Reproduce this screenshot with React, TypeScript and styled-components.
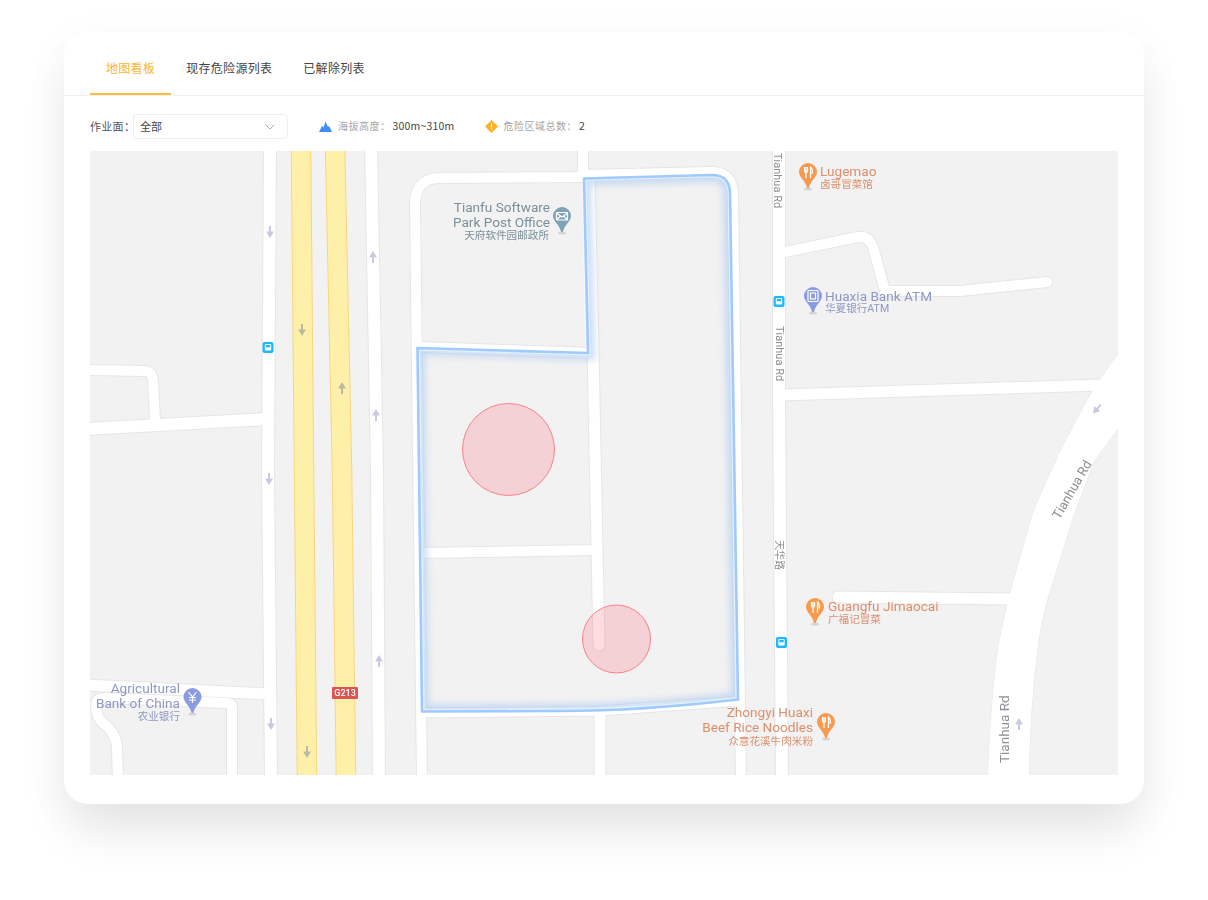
import React, { useState } from "react"
import styled, { createGlobalStyle } from "styled-components"

const GlobalStyle = createGlobalStyle`
  html, body {
    margin: 0;
    padding: 0;
    background: #fff;
  }
`

const tabs = ["地图看板", "现存危险源列表", "已解除列表"]

// page coordinates, the svg viewBox starts at the map's top left corner
const roads = [
  { d: "M270 145 L268 470 L271 780", w: 12 },
  { d: "M371 145 L377 470 L379 780", w: 12 },
  { d: "M583 145 L583 178", w: 10 },
  { d: "M583 177 L440 178 Q415 178 415 205 L422 780", w: 10 },
  { d: "M583 175 L712 172 Q733 172 733 195 L741 780", w: 10 },
  { d: "M420 347 L590 353", w: 10 },
  { d: "M589 176 L593 350 L599 645", w: 11, round: true },
  { d: "M420 553 L596 550", w: 10 },
  { d: "M422 713 L600 711 L740 701", w: 9 },
  { d: "M600 711 L600 780", w: 11 },
  { d: "M779 145 L779 400 L782 780", w: 12 },
  { d: "M780 253 L858 237 Q868 235 873 247 L885 291 L960 291 L1047 282", w: 10, round: true },
  { d: "M780 395 L1100 385", w: 11 },
  { d: "M838 597 L1012 599", w: 11, round: true },
  { d: "M85 429 L268 419", w: 12 },
  { d: "M85 370 L146 371 Q152 372 153 380 L155 420", w: 10 },
  { d: "M85 685 L268 694", w: 11 },
  { d: "M232 780 L232 708 Q232 703 227 703 L104 698 Q96 698 96 706 Q96 717 103 723 Q116 733 117 747 L118 780", w: 10 },
]

const tianhuaCurve =
  "M1124 345 L1093 390 Q1065 440 1053 467 Q1040 495 1033 513 L1010 593 L1007 605 L998 647 Q990 710 988 780 L1029 780 Q1029 720 1037 653 Q1040 625 1048 597 L1073 517 Q1085 485 1093 463 L1124 420 Z"

const highways = ["M301 145 L304 470 L307 780", "M335 145 L342 470 L346 780"]

const arrows = [
  { x: 270, y: 232, angle: 180 },
  { x: 269, y: 479, angle: 180 },
  { x: 271, y: 724, angle: 180 },
  { x: 373, y: 257, angle: 0 },
  { x: 376, y: 415, angle: 0 },
  { x: 379, y: 661, angle: 0 },
  { x: 1019, y: 724, angle: 0 },
  { x: 1097, y: 409, angle: 220 },
  { x: 302, y: 330, angle: 180, onHighway: true },
  { x: 342, y: 388, angle: 0, onHighway: true },
  { x: 307, y: 752, angle: 180, onHighway: true },
]

const busStops = [
  { x: 268, y: 347.5 },
  { x: 779, y: 301.5 },
  { x: 781.5, y: 642.5 },
]

const outline =
  "M584 178.5 L712 175 Q729 175 730 192 L738 699.5 Q640 711 560 711 L422 711.5 L417.5 348 L588 353 Z"

type PinKind = "food" | "mail" | "atm" | "bank"

const pinColors: Record<PinKind, string> = {
  food: "#f59a4e",
  mail: "#7fa2b5",
  atm: "#8b9be2",
  bank: "#8b9be2",
}

const pins: { x: number; y: number; kind: PinKind }[] = [
  { x: 808, y: 172, kind: "food" },
  { x: 562, y: 216, kind: "mail" },
  { x: 813, y: 296, kind: "atm" },
  { x: 815, y: 607, kind: "food" },
  { x: 826, y: 722, kind: "food" },
  { x: 192.5, y: 697, kind: "bank" },
]

const labels = [
  { x: 550, y: 211.5, tone: "#7b8f9b", end: true, text: "Tianfu Software" },
  { x: 550, y: 227, tone: "#7b8f9b", end: true, text: "Park Post Office" },
  { x: 549, y: 239, tone: "#7b8f9b", end: true, small: true, text: "天府软件园邮政所" },
  { x: 820, y: 176, tone: "#dc8f6c", text: "Lugemao" },
  { x: 820, y: 188, tone: "#dc8f6c", small: true, text: "卤哥冒菜馆" },
  { x: 825, y: 300.5, tone: "#8e97c4", text: "Huaxia Bank ATM" },
  { x: 825, y: 312, tone: "#8e97c4", small: true, text: "华夏银行ATM" },
  { x: 828, y: 611, tone: "#dc8f6c", text: "Guangfu Jimaocai" },
  { x: 828, y: 623, tone: "#dc8f6c", small: true, text: "广福记冒菜" },
  { x: 813, y: 717, tone: "#dc8f6c", end: true, text: "Zhongyi Huaxi" },
  { x: 813, y: 732, tone: "#dc8f6c", end: true, text: "Beef Rice Noodles" },
  { x: 813, y: 745, tone: "#dc8f6c", end: true, small: true, text: "众意花溪牛肉米粉" },
  { x: 180, y: 693, tone: "#8e97c4", end: true, text: "Agricultural" },
  { x: 180, y: 708, tone: "#8e97c4", end: true, text: "Bank of China" },
  { x: 180, y: 720, tone: "#8e97c4", end: true, small: true, text: "农业银行" },
]

const roadNames = [
  { x: 774, y: 153, angle: 90, size: 11, text: "Tianhua Rd" },
  { x: 775.5, y: 326, angle: 90, size: 11, text: "Tianhua Rd" },
  { x: 775.5, y: 540, angle: 90, size: 10, text: "天华路" },
  { x: 1059.5, y: 520, angle: -60, size: 13, text: "Tianhua Rd" },
  { x: 1009, y: 763, angle: -90, size: 13.5, text: "Tianhua Rd" },
]

const PinIcon = ({ kind }: { kind: PinKind }) => {
  if (kind === "food") {
    return (
      <IconStroke>
        <path d="M-3.5 -5 V-1.5 Q-3.5 0.5 -2 0.5 Q-0.5 0.5 -0.5 -1.5 V-5 M-2 -5 V6" />
        <path d="M2.5 6 V-5 Q4.5 -3.5 4.5 1 H2.5" />
      </IconStroke>
    )
  }
  if (kind === "mail") {
    return (
      <IconStroke>
        <rect x="-5.5" y="-3.5" width="11" height="7.5" rx="0.8" />
        <path d="M-5.5 -3 L0 1 L5.5 -3 M-5.5 4 L-1.5 0 M5.5 4 L1.5 0" />
      </IconStroke>
    )
  }
  if (kind === "atm") {
    return (
      <IconStroke>
        <rect x="-5" y="-5.5" width="10" height="11" rx="0.5" />
        <rect x="-2.5" y="-3" width="5" height="6" />
      </IconStroke>
    )
  }
  return (
    <IconStroke>
      <path d="M-4 -5 L0 0 L4 -5 M0 0 V6 M-3.5 0.5 H3.5 M-3.5 3 H3.5" />
    </IconStroke>
  )
}

const MapPin = ({ x, y, kind }: { x: number; y: number; kind: PinKind }) => (
  <g transform={`translate(${x} ${y})`}>
    <ellipse cx="0" cy="17" rx="4" ry="1.6" fill="#d5d5d5" />
    <path
      d="M-9 0 A9 9 0 1 1 9 0 C9 5 3 8 0.8 16 H-0.8 C-3 8 -9 5 -9 0 Z"
      fill={pinColors[kind]}
    />
    <PinIcon kind={kind} />
  </g>
)

const RoadMap = () => (
  <MapCanvas viewBox="90 151 1028 624">
    <defs>
      <clipPath id="zone-clip">
        <path d={outline} />
      </clipPath>
      <filter id="zone-blur" x="-10%" y="-10%" width="120%" height="120%">
        <feGaussianBlur stdDeviation="3.5" />
      </filter>
    </defs>

    <rect x="90" y="151" width="1028" height="624" fill="#f2f2f2" />

    <path d={tianhuaCurve} fill="#fff" stroke="#e6e6e6" strokeWidth="1" />
    {roads.map((road) => (
      <RoadCasing
        key={road.d}
        d={road.d}
        strokeWidth={road.w + 2}
        strokeLinecap={road.round ? "round" : "butt"}
      />
    ))}
    {roads.map((road) => (
      <RoadFill
        key={road.d}
        d={road.d}
        strokeWidth={road.w}
        strokeLinecap={road.round ? "round" : "butt"}
      />
    ))}
    <path d={tianhuaCurve} fill="#fff" />

    {highways.map((d) => (
      <g key={d}>
        <HighwayEdge d={d} />
        <HighwayFill d={d} />
      </g>
    ))}

    {arrows.map((arrow) => (
      <g
        key={`${arrow.x}-${arrow.y}`}
        transform={`translate(${arrow.x} ${arrow.y}) rotate(${arrow.angle})`}
        fill={arrow.onHighway ? "#bcb9a0" : "#c8cbe0"}
      >
        <rect x="-1" y="-2" width="2" height="8" />
        <path d="M-4 0.5 L0 -6 L4 0.5 Z" />
      </g>
    ))}

    {busStops.map((stop) => (
      <g key={stop.x} transform={`translate(${stop.x} ${stop.y})`}>
        <rect x="-5.5" y="-5.5" width="11" height="11" rx="2" fill="#1db8ff" />
        <rect x="-3.2" y="-3.5" width="6.4" height="6.5" rx="1" fill="#fff" />
        <rect x="-2.2" y="-2.6" width="4.4" height="2.4" fill="#1db8ff" />
      </g>
    ))}

    <g transform="translate(345 693)">
      <rect x="-13" y="-6" width="26" height="12" rx="1" fill="#dc5555" />
      <ShieldText x="0" y="3.4">G213</ShieldText>
    </g>

    <g clipPath="url(#zone-clip)">
      <path
        d={outline}
        fill="none"
        stroke="#a9c9f2"
        strokeWidth="14"
        opacity="0.6"
        filter="url(#zone-blur)"
      />
    </g>
    <path d={outline} fill="none" stroke="#fff" strokeWidth="5" opacity="0.5" />
    <path d={outline} fill="none" stroke="#9ecaff" strokeWidth="2.6" />

    <Hazard cx="508.5" cy="449.5" r="46" />
    <Hazard cx="616.5" cy="639" r="34" />

    {roadNames.map((name) => (
      <RoadName
        key={`${name.x}-${name.y}`}
        $size={name.size}
        transform={`translate(${name.x} ${name.y}) rotate(${name.angle})`}
      >
        {name.text}
      </RoadName>
    ))}

    {labels.map((label) => (
      <PoiLabel
        key={label.text}
        x={label.x}
        y={label.y}
        fill={label.tone}
        textAnchor={label.end ? "end" : "start"}
        $small={label.small}
      >
        {label.text}
      </PoiLabel>
    ))}

    {pins.map((pin) => (
      <MapPin key={`${pin.x}-${pin.y}`} {...pin} />
    ))}
  </MapCanvas>
)

const App = () => {
  const [activeTab, setActiveTab] = useState(0)

  return (
    <Page>
      <GlobalStyle />
      <Card>
        <TabBar>
          {tabs.map((tab, i) => (
            <Tab key={tab} $active={i === activeTab} onClick={() => setActiveTab(i)}>
              {tab}
            </Tab>
          ))}
        </TabBar>

        <Toolbar>
          <FieldLabel>作业面：</FieldLabel>
          <Select>
            <SelectValue>全部</SelectValue>
            <svg width="10" height="6" viewBox="0 0 10 6" fill="none">
              <path d="M0.7 0.7 L5 5 L9.3 0.7" stroke="#aaa" strokeWidth="1" />
            </svg>
          </Select>

          <Stat>
            <svg width="13" height="11" viewBox="0 0 13 11">
              <path
                d="M0 11 L3 5 L4.5 6.5 L6.5 0.5 L9 6 L10.2 5 L13 11 Z"
                fill="#3f8ef5"
              />
            </svg>
            <StatName>海拔高度：</StatName>
            <StatValue>300m~310m</StatValue>
          </Stat>

          <Stat>
            <svg width="13" height="13" viewBox="0 0 13 13">
              <path d="M6.5 0 L13 6.5 L6.5 13 L0 6.5 Z" fill="#fcb02a" />
              <rect x="5.9" y="3.2" width="1.2" height="4.2" fill="#fff" />
              <rect x="5.9" y="8.3" width="1.2" height="1.3" fill="#fff" />
            </svg>
            <StatName>危险区域总数：</StatName>
            <StatValue>2</StatValue>
          </Stat>
        </Toolbar>

        <RoadMap />
      </Card>
    </Page>
  )
}

export default App

const Page = styled.div`
  box-sizing: border-box;
  width: 1208px;
  height: 900px;
  padding: 32px 64px 0;
  background: #fff;
  overflow: hidden;
  font-family: "Noto Sans CJK SC", "Noto Sans", sans-serif;
`

const Card = styled.div`
  display: flex;
  flex-direction: column;
  box-sizing: border-box;
  width: 1080px;
  height: 772px;
  padding: 0 26px;
  background: #fff;
  border-radius: 24px;
  box-shadow: 0 32px 50px -6px rgba(0, 0, 0, 0.085), 0 12px 50px rgba(0, 0, 0, 0.045);
`

const TabBar = styled.div`
  display: flex;
  height: 64px;
  box-sizing: border-box;
  margin: 0 -26px;
  padding: 0 26px;
  border-bottom: 1px solid #f1f1f1;
`

const Tab = styled.div<{ $active: boolean }>`
  box-sizing: border-box;
  height: 63px;
  margin-right: -1px;
  padding: 0 16px;
  font-size: 12px;
  letter-spacing: 0.3px;
  line-height: 71px;
  cursor: pointer;
  color: ${(props) => (props.$active ? "#fcb62f" : "#444")};
  border-bottom: 2px solid
    ${(props) => (props.$active ? "#fcbc3c" : "transparent")};
`

const Toolbar = styled.div`
  display: flex;
  align-items: center;
  box-sizing: border-box;
  height: 55px;
  padding-top: 6px;
  font-size: 11px;
  color: #555;
`

const FieldLabel = styled.span`
  width: 43px;
  flex-shrink: 0;
  padding-bottom: 2px;
  white-space: nowrap;
  letter-spacing: 0.3px;
`

const Select = styled.div`
  display: flex;
  align-items: center;
  justify-content: space-between;
  box-sizing: border-box;
  width: 155px;
  height: 25px;
  padding: 0 12px 0 6px;
  margin-right: 31px;
  border: 1px solid #eee;
  border-radius: 4px;
  font-size: 11px;
  color: #444;
`

const SelectValue = styled.span`
  padding-bottom: 2px;
`

const Stat = styled.div`
  display: flex;
  align-items: center;
  margin-right: 30px;
`

const StatName = styled.span`
  margin-left: 6px;
  padding-bottom: 2px;
  font-size: 10px;
  letter-spacing: 0.5px;
  color: #a6a6a6;
`

const StatValue = styled.span`
  margin-left: 2px;
  padding-bottom: 2px;
  font-size: 10.5px;
  letter-spacing: 0.2px;
  color: #444;
`

const MapCanvas = styled.svg`
  display: block;
  width: 1028px;
  height: 624px;
  flex-shrink: 0;
  filter: blur(0.35px);
`

const RoadCasing = styled.path`
  fill: none;
  stroke: #e6e6e6;
`

const RoadFill = styled.path`
  fill: none;
  stroke: #fff;
`

const HighwayEdge = styled.path`
  fill: none;
  stroke: #f8d67f;
  stroke-width: 20.5;
`

const HighwayFill = styled.path`
  fill: none;
  stroke: #fff0a9;
  stroke-width: 18.5;
`

const Hazard = styled.circle`
  fill: rgba(255, 70, 90, 0.19);
  stroke: #fb808e;
  stroke-width: 1;
`

const ShieldText = styled.text`
  font-family: Roboto, sans-serif;
  font-size: 9px;
  font-weight: 500;
  fill: #fff;
  text-anchor: middle;
`

const RoadName = styled.text<{ $size: number }>`
  font-family: Roboto, "Noto Sans CJK SC", sans-serif;
  font-size: ${(props) => props.$size}px;
  fill: #8b8f94;
`

const PoiLabel = styled.text<{ $small?: boolean }>`
  font-family: Roboto, "Noto Sans CJK SC", sans-serif;
  font-size: ${(props) => (props.$small ? "10.6px" : "13.6px")};
`

const IconStroke = styled.g`
  fill: none;
  stroke: #fff;
  stroke-width: 1.2;
`
